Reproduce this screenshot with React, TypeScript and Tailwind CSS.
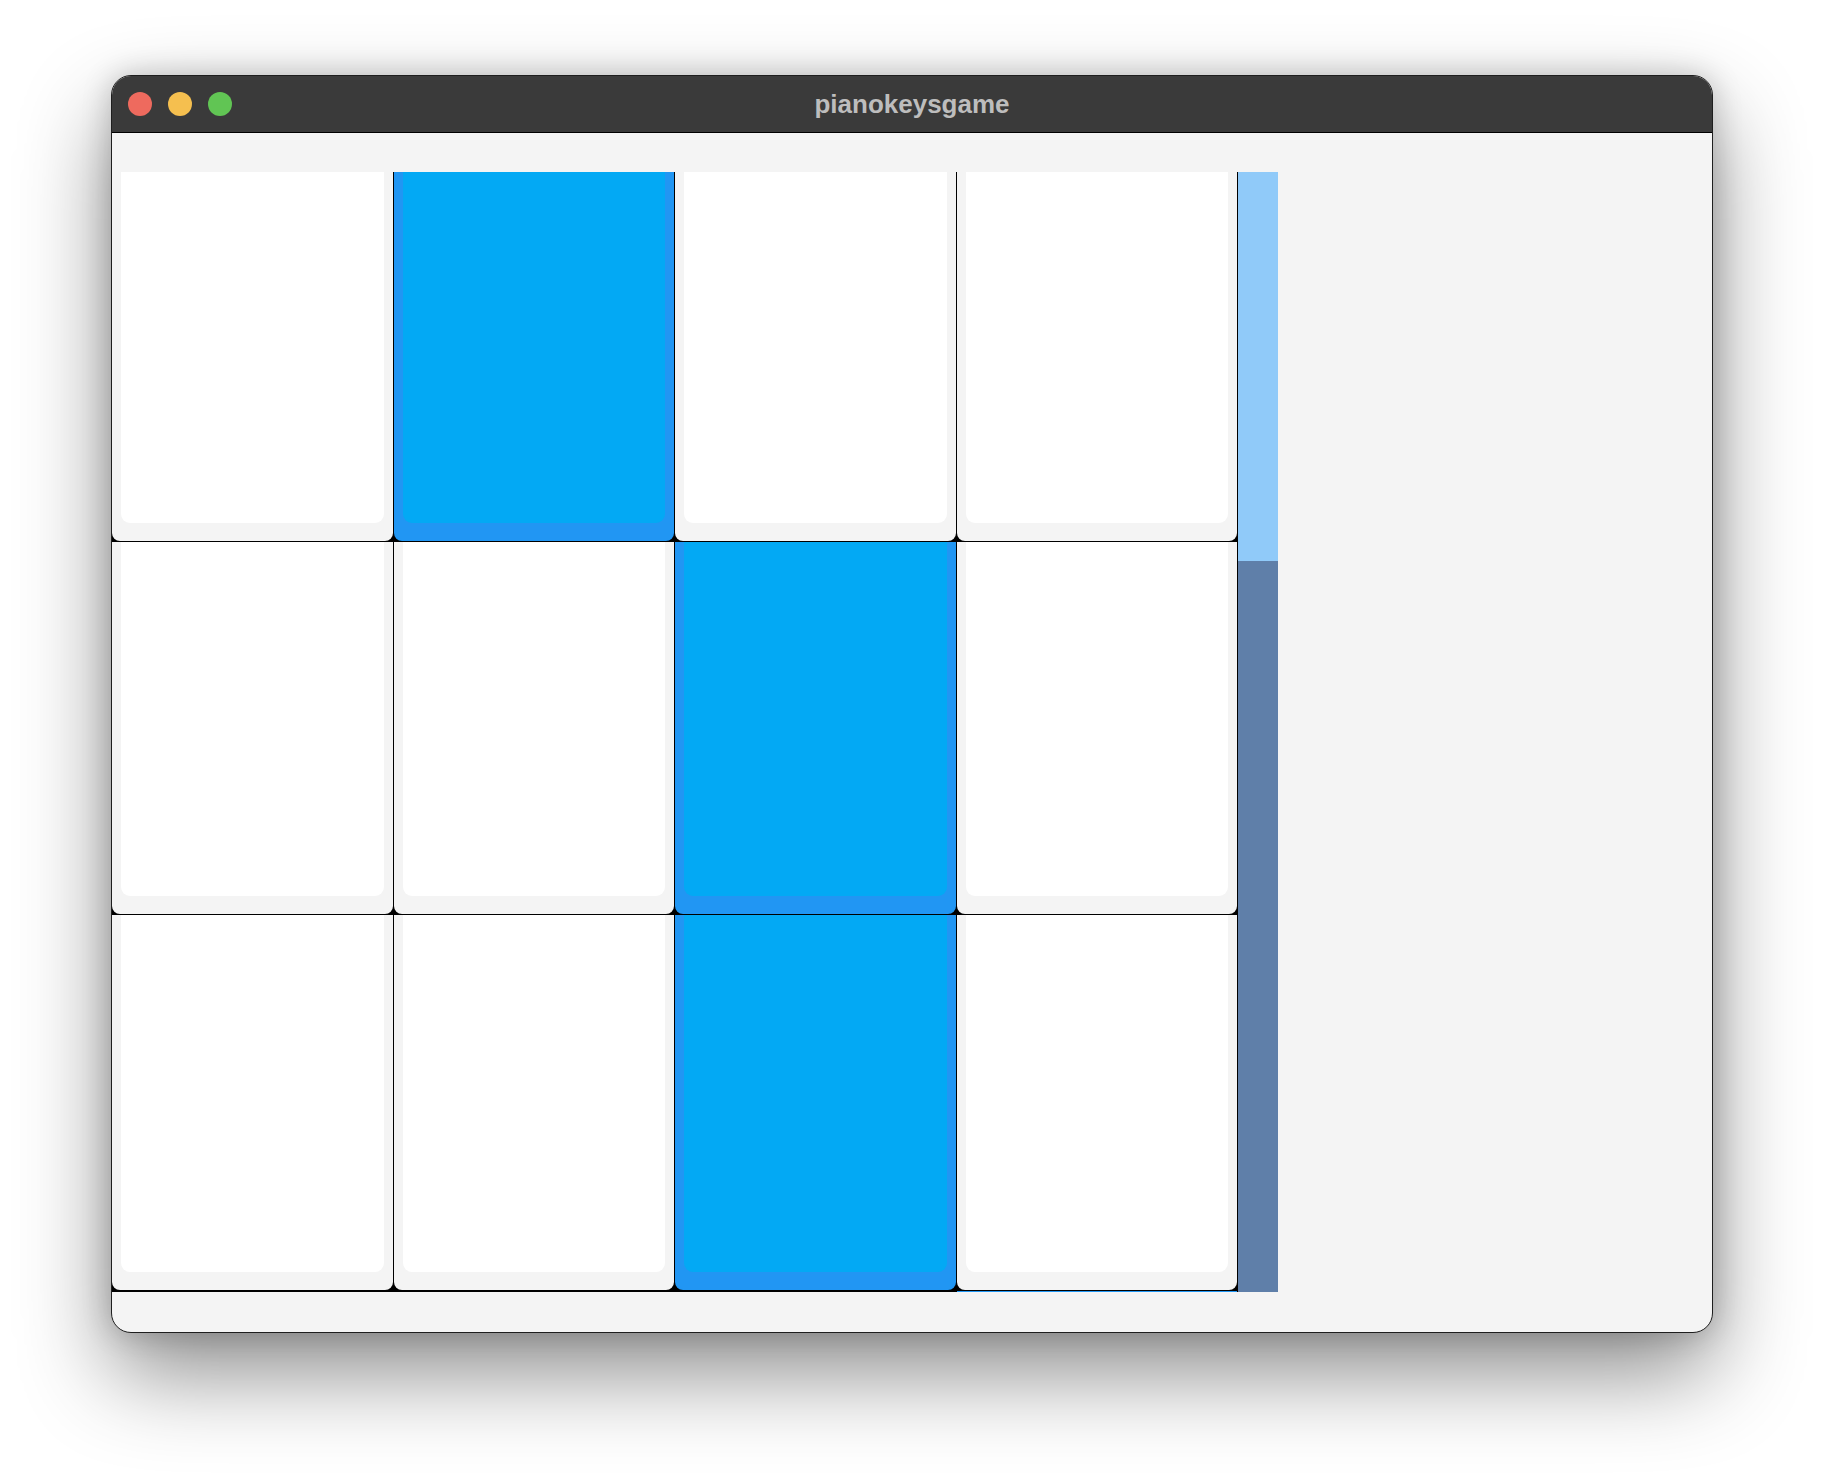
import React from "react";

// which tile in each visible row is the "black key" (blue)
const rows = [
  { height: "h-[369px]", active: 1 },
  { height: "h-[373px]", active: 2 },
  { height: "h-[375px]", active: 2 },
];

const Tile = ({ active }: { active: boolean }) => {
  return (
    <div
      className={
        active
          ? "h-full bg-[#2196f3] rounded-b-[8px] px-[9px] pb-[18px]"
          : "h-full bg-[#f4f4f4] rounded-b-[8px] px-[9px] pb-[18px]"
      }
    >
      <div
        className={
          active
            ? "h-full bg-[#03a9f4] rounded-b-[9px]"
            : "h-full bg-white rounded-b-[9px]"
        }
      />
    </div>
  );
};

const TrafficLights = () => (
  <div className="absolute left-[16px] top-0 h-full flex items-center gap-[16px]">
    <span className="w-[24px] h-[24px] rounded-full bg-[#ee6a5e]" />
    <span className="w-[24px] h-[24px] rounded-full bg-[#f5bf4f]" />
    <span className="w-[24px] h-[24px] rounded-full bg-[#61c554]" />
  </div>
);

export default function App() {
  return (
    <div
      className="min-h-screen w-full bg-white pt-[75px] pl-[111px]"
      style={{ fontFamily: '"Liberation Sans", Arial, sans-serif' }}
    >
      <div className="w-[1602px] h-[1258px] rounded-[20px] border border-[#1e1e1e] overflow-hidden bg-[#f4f4f4] flex flex-col shadow-[0_40px_90px_rgba(0,0,0,0.45),0_0_30px_rgba(0,0,0,0.2)]">
        <div className="relative h-[57px] shrink-0 bg-[#3a3a3a] border-b border-black flex items-center justify-center">
          <TrafficLights />
          <span className="text-[26px] font-bold text-[#bdbdbd]">pianokeysgame</span>
        </div>

        <div className="flex-1 pt-[39px]">
          <div className="flex h-[1120px] w-[1166px]">
            <div className="w-[1125px] flex flex-col gap-px bg-black">
              {rows.map((row, i) => (
                <div key={i} className={`${row.height} grid grid-cols-4 gap-px`}>
                  {[0, 1, 2, 3].map((c) => (
                    <Tile key={c} active={c === row.active} />
                  ))}
                </div>
              ))}
              <div className="h-px grid grid-cols-4 gap-px">
                <div />
                <div />
                <div />
                <div className="bg-[#2196f3]" />
              </div>
            </div>
            <div className="w-[41px] border-l border-black flex flex-col">
              <div className="h-[389px] bg-[#90caf9]" />
              <div className="flex-1 bg-[#5f7fa9]" />
            </div>
          </div>
        </div>
      </div>
    </div>
  );
}
